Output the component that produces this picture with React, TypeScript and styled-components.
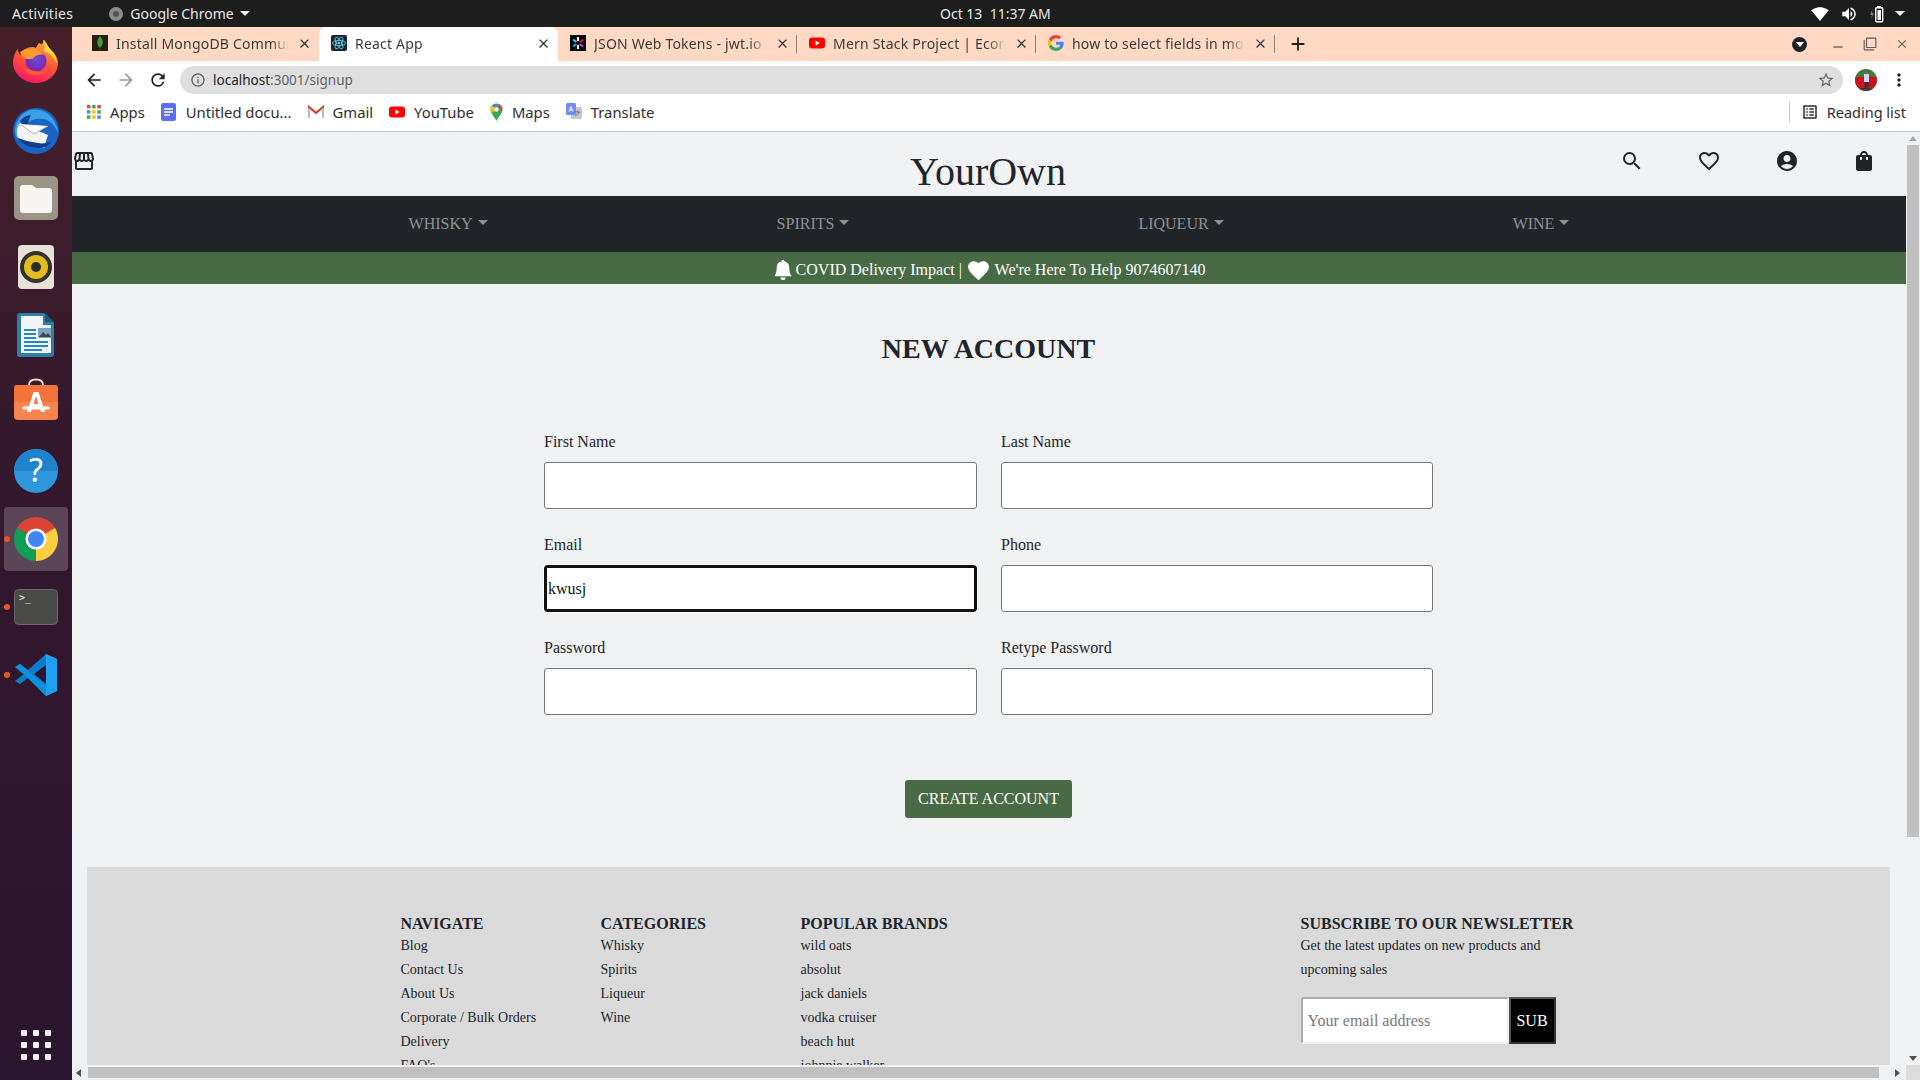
import React from 'react';
import styled, { createGlobalStyle } from 'styled-components';
import {
  MdArrowBack, MdArrowForward, MdRefresh, MdInfoOutline, MdStarBorder, MdMoreVert, MdClose, MdAdd,
  MdOutlineStorefront, MdSearch, MdFavoriteBorder, MdAccountCircle, MdShoppingBag, MdFavorite,
  MdSignalWifi4Bar, MdVolumeUp, MdRemove, MdFilterNone, MdOutlineListAlt,
} from 'react-icons/md';
import { BsBellFill } from 'react-icons/bs';

const Global = createGlobalStyle`
  html, body { margin: 0; padding: 0; width: 1920px; height: 1080px; overflow: hidden; }
  * { box-sizing: border-box; }
  body { font-family: "Liberation Serif", "Times New Roman", serif; color: #212529; }
`;

const UI = `"Noto Sans", "Open Sans", sans-serif`;

const Screen = styled.div`
  width: 1920px; height: 1080px; display: grid; grid-template-rows: 27px 1fr; overflow: hidden;
`;
const TopBar = styled.header`
  background: #1d1d1d; color: #e8e8e8; font: 14px ${UI}; display: grid;
  grid-template-columns: 928px 1fr auto; align-items: center; padding-left: 12px;
`;
const TopLeft = styled.div`display: flex; align-items: center;`;
const Activities = styled.span`letter-spacing: .3px;`;
const ChromeMenu = styled.div`display: flex; align-items: center; gap: 7px; margin-left: 36px;`;
const DimCircle = styled.span`
  width: 14px; height: 14px; border-radius: 50%; display: block;
  border: 4px solid #8b8b8b; background-color: #555;
`;
const Caret = styled.span`
  width: 0; height: 0; border-left: 5px solid transparent; border-right: 5px solid transparent;
  border-top: 5px solid #eee; margin-left: -1px;
`;
const TrayCaret = styled(Caret)`margin-left: -3px;`;
const Clock = styled.div`white-space: pre;`;
const Tray = styled.div`display: flex; align-items: center; gap: 11px; padding-right: 15px; font-size: 18px; color: #fff;`;

const Desk = styled.div`display: grid; grid-template-columns: 72px 1fr; min-height: 0;`;
const Dock = styled.nav`
  background: linear-gradient(180deg, #45202a 0%, #33182e 45%, #29152d 100%);
  display: flex; flex-direction: column; align-items: center; padding: 0 4px 3px;
`;
const DockItem = styled.div<{ $active?: boolean; $running?: boolean }>`
  position: relative; width: 64px; height: 64px; margin-top: 4px; border-radius: 4px;
  display: flex; align-items: center; justify-content: center;
  background: ${p => (p.$active ? 'rgba(255,255,255,0.2)' : 'transparent')};
  &::before {
    content: ''; display: ${p => (p.$running ? 'block' : 'none')}; position: absolute;
    left: 0; top: 29px; width: 6px; height: 6px; border-radius: 50%; background: #e95420;
  }
`;
const GridItem = styled(DockItem)`margin-top: auto;`;

const Browser = styled.div`display: grid; grid-template-rows: 34px 37px 34px 1fr; min-width: 0; min-height: 0; background: #fff;`;
const TabStrip = styled.div`background: #ffd9c4; display: flex; align-items: flex-end; padding-left: 8px; font: 14px ${UI}; color: #3b3b3b; letter-spacing: .2px;`;
const Tab = styled.div<{ $active?: boolean; $sep?: boolean }>`
  width: 239px; height: 34px; display: flex; align-items: center; padding: 0 7px 2px 12px; gap: 8px;
  background: ${p => (p.$active ? '#fff' : 'transparent')}; border-radius: 8px 8px 0 0;
  position: relative;
  &::after {
    content: ''; display: ${p => (p.$sep ? 'block' : 'none')}; position: absolute; right: 0; top: 8px;
    width: 1px; height: 18px; background: #8d8175;
  }
`;
const TabTitle = styled.span`
  flex: 1; white-space: nowrap; overflow: hidden;
  -webkit-mask-image: linear-gradient(90deg, #000 90%, transparent 100%);
  mask-image: linear-gradient(90deg, #000 90%, transparent 100%);
`;
const TabClose = styled(MdClose)`font-size: 15px; color: #333; flex: none;`;
const NewTab = styled(MdAdd)`font-size: 22px; color: #222; margin-left: 12px; align-self: center;`;
const WinControls = styled.div`margin-left: auto; align-self: center; display: flex; align-items: center; color: #5f5f5f; padding-right: 2px;`;
const DarkCircle = styled.span`
  width: 15px; height: 15px; border-radius: 50%; background: #202124; display: flex; align-items: center;
  justify-content: center; margin-right: 15px;
  &::after { content: ''; border-left: 4px solid transparent; border-right: 4px solid transparent; border-top: 5px solid #fff; }
`;
const WinBtn = styled.span<{ $low?: boolean }>`
  width: 32px; display: flex; justify-content: center; font-size: ${p => (p.$low ? '16px' : '14px')};
  padding-top: ${p => (p.$low ? '5px' : '0')};
`;

const Toolbar = styled.div`display: flex; align-items: center; padding: 0 5px 0 6px; color: #202124;`;
const NavBtn = styled.span<{ $dim?: boolean }>`
  width: 32px; display: flex; justify-content: center; font-size: 20px; color: ${p => (p.$dim ? '#9a9a9a' : '#202124')};
`;
const Omnibox = styled.div`
  flex: 1; height: 28px; margin: 0 12px 0 6px; border-radius: 14px; background: #dfdfdf; display: flex;
  align-items: center; padding: 0 8px 0 10px; font: 13.5px ${UI}; color: #5f6368; gap: 7px;
`;
const UrlText = styled.span`flex: 1;`;
const Host = styled.span`color: #202124;`;
const AvatarSlot = styled.span`display: flex; margin-right: 6px;`;
const Bookmarks = styled.div`
  display: flex; align-items: center; padding: 0 14px 6px 15px; font: 14.8px ${UI}; color: #2e2e2e; gap: 16px;
  border-bottom: 1px solid #c8c8c8;
`;
const Bookmark = styled.span`display: flex; align-items: center; gap: 9px; white-space: nowrap;`;
const ReadingList = styled(Bookmark)`
  margin-left: auto; height: 20px; border-left: 1px solid #c4c4c4; padding-left: 11px; gap: 8px; font-size: 14.5px;
`;

const Viewport = styled.div`
  display: grid; grid-template-columns: 1fr 14px; grid-template-rows: 1fr 15px; min-height: 0; min-width: 0; background: #f0f1f3;
`;
const Page = styled.main`overflow: hidden; min-width: 0; min-height: 0; background: #f0f1f3;`;
const VScroll = styled.div`display: flex; flex-direction: column; align-items: center; padding: 4px 0; background: #f0f1f3;`;
const HScroll = styled.div`display: flex; align-items: center; padding: 0 4px; background: #f0f1f3;`;
const ScrollCorner = styled.div`background: #dcdcdc;`;
const VThumb = styled.div`width: 12px; height: 692px; background: #c0c0c0; margin-top: 4px;`;
const VSpace = styled.div`flex: 1;`;
const HThumb = styled.div`height: 11px; width: 1791px; background: #c0c0c0; margin-left: 7px;`;
const ArrowUp = styled.span`border-left: 4px solid transparent; border-right: 4px solid transparent; border-bottom: 5px solid #a8a8a8;`;
const ArrowDown = styled.span`border-left: 4px solid transparent; border-right: 4px solid transparent; border-top: 5px solid #505050;`;
const ArrowLeft = styled.span`border-top: 4px solid transparent; border-bottom: 4px solid transparent; border-right: 5px solid #505050;`;
const ArrowRight = styled.span`border-top: 4px solid transparent; border-bottom: 4px solid transparent; border-left: 5px solid #505050; margin-left: auto; margin-right: 2px;`;

const Header = styled.div`
  height: 64px; display: grid; grid-template-columns: 1fr auto 1fr; padding: 17px 0 0; align-items: start;
`;
const HeaderIconL = styled(MdOutlineStorefront)`font-size: 24px; display: block;`;
const Brand = styled.h1`margin: -1px 2px 0 0; font-size: 40px; font-weight: 400; line-height: 47px; height: 47px;`;
const HeaderIcons = styled.div`display: flex; justify-content: flex-end; gap: 53.3px; font-size: 24px; padding-right: 30px;`;
const NavBar = styled.nav`
  height: 56px; background: #212529; display: flex; justify-content: center; gap: 289px; align-items: center;
  color: #8f9194; font-size: 16px;
`;
const NavLink = styled.a`
  display: flex; align-items: center; gap: 5px;
  &::after { content: ''; border-left: 5px solid transparent; border-right: 5px solid transparent; border-top: 5px solid #8f9194; margin-top: -3px; }
`;
const Notice = styled.div`
  height: 32px; background: #486b45; color: #fff; font-size: 16px; display: flex; justify-content: center; align-items: center;
  padding: 4px 0 0; white-space: pre;
`;
const BellIcon = styled(BsBellFill)`font-size: 20px; margin: 0 3px 0 0;`;
const HeartIcon = styled(MdFavorite)`font-size: 25px; margin: 0;`;
const Title = styled.h2`
  margin: 48px 0 64px; text-align: center; font-size: 28px; font-weight: 700; line-height: 34px; padding-right: 1px;
`;
const Form = styled.form`
  width: 889px; margin: 0 0 0 472px; display: grid; grid-template-columns: 433px 432px; column-gap: 24px; row-gap: 24px;
`;
const Field = styled.div`display: flex; flex-direction: column; gap: 8px;`;
const Label = styled.label`font-size: 16px; line-height: 24px; height: 24px;`;
const Input = styled.input<{ $focus?: boolean }>`
  width: 100%; height: 47px; background: #fff; border-radius: 3px; font: 16px "Liberation Serif", serif; color: #111;
  padding: 0 ${p => (p.$focus ? '1px' : '2px')};
  border: ${p => (p.$focus ? '3px solid #101010' : '1px solid #767676')};
  outline: ${p => (p.$focus ? '1px solid #fff' : 'none')};
`;
const Actions = styled.div`display: flex; justify-content: center; margin: 65px 0 49px; padding-right: 1px;`;
const Submit = styled.button`
  width: 167px; height: 38px; background: #486b45; color: #fff; border: 0; border-radius: 3px;
  font: 16px "Liberation Serif", serif;
`;
const Footer = styled.footer`
  margin: 0 16px 0 15px; background: #dadada; padding: 46px 0 40px 313.5px; display: grid;
  grid-template-columns: 200px 200px 500px 300px; font-size: 14px; line-height: 24px;
`;
const Column = styled.div`display: flex; flex-direction: column;`;
const ColHead = styled.h3`margin: 0; font-size: 16px; font-weight: 700; line-height: 21px; white-space: nowrap;`;
const ColItem = styled.a`display: block; white-space: nowrap;`;
const Subscribe = styled.div`display: flex; margin-top: 15px;`;
const EmailInput = styled.input`
  width: 208px; height: 47px; border: 2px solid #ababab; border-right-color: #eee; border-bottom-color: #eee; border-radius: 3px; background: #fff;
  font: 16px "Liberation Serif", serif; padding: 0 5px;
  &::placeholder { color: #777; opacity: 1; }
`;
const SubButton = styled.button`
  width: 47px; height: 47px; background: #000; color: #fff; border: 2px solid #555; border-right-color: #333; border-bottom-color: #333; padding: 0;
  font: 16px "Liberation Serif", serif;
`;

const Battery = () => (
  <svg width="18" height="18" viewBox="0 0 18 18"><path d="M3.500 4L1 10h2l-1 4 3-6H3z" fill="#777" /><rect x="8" y="1" width="4" height="2" fill="#fff" /><rect x="6.700" y="2.700" width="7" height="14" rx="1" fill="none" stroke="#fff" strokeWidth="1.400" /><rect x="8.500" y="5" width="3.400" height="10" fill="#fff" /></svg>
);
const Mongo = () => (
  <svg width="16" height="16" viewBox="0 0 16 16"><rect width="16" height="16" fill="#2a1f12" /><path d="M8 1c2.600 3 3.200 5.400 2.600 7.600C10.100 10.700 9 11.800 8.300 12.600L8 15l-.4-2.400C6.800 11.800 5.800 10.600 5.400 8.600 5 6.200 6 3.600 8 1z" fill="#3fa037" /></svg>
);
const ReactFav = () => (
  <svg width="16" height="16" viewBox="0 0 16 16"><rect width="16" height="16" rx="2" fill="#20232a" /><g fill="none" stroke="#61dafb" strokeWidth=".8"><ellipse cx="8" cy="8" rx="6.500" ry="2.600" /><ellipse cx="8" cy="8" rx="6.500" ry="2.600" transform="rotate(60 8 8)" /><ellipse cx="8" cy="8" rx="6.500" ry="2.600" transform="rotate(120 8 8)" /></g><circle cx="8" cy="8" r="1.300" fill="#61dafb" /></svg>
);
const Jwt = () => (
  <svg width="16" height="16" viewBox="0 0 16 16"><rect width="16" height="16" fill="#000" /><g strokeWidth="2"><path d="M8 2v4" stroke="#fff" /><path d="M8 10v4" stroke="#fff" /><path d="M3 4.500l3.400 2.500" stroke="#00f2e6" /><path d="M13 11.500L9.600 9" stroke="#d63aff" /><path d="M13 4.500L9.600 7" stroke="#fb015b" /><path d="M3 11.500L6.400 9" stroke="#00b9f1" /></g></svg>
);
const Yt = () => (
  <svg width="16" height="16" viewBox="0 0 16 16"><rect y="2.500" width="16" height="11" rx="3" fill="#f00" /><path d="M6.500 5.500L10.800 8l-4.300 2.500z" fill="#fff" /></svg>
);
const GoogleG = () => (
  <svg width="16" height="16" viewBox="0 0 48 48"><path fill="#EA4335" d="M24 9.500c3.500 0 6.700 1.200 9.200 3.600l6.900-6.900C35.900 2.400 30.500 0 24 0 14.600 0 6.500 5.400 2.600 13.200l8 6.200C12.400 13.700 17.700 9.500 24 9.500z" /><path fill="#4285F4" d="M47 24.500c0-1.600-.1-3.100-.4-4.500H24v9h12.900c-.6 3-2.200 5.500-4.800 7.200l7.700 6C44.300 38 47 31.800 47 24.500z" /><path fill="#FBBC05" d="M10.500 28.600c-.5-1.400-.8-3-.8-4.600s.3-3.200.8-4.600l-8-6.200C1 16.500 0 20.100 0 24s1 7.500 2.600 10.800z" /><path fill="#34A853" d="M24 48c6.500 0 11.900-2.100 15.900-5.800l-7.700-6c-2.200 1.400-4.900 2.300-8.200 2.300-6.300 0-11.600-4.200-13.500-9.900l-8 6.200C6.500 42.600 14.600 48 24 48z" /></svg>
);
const AppsIcon = () => (
  <svg width="14" height="14" viewBox="0 0 14 14">
    {[['#ea4335', '#34a853', '#ea4335'], ['#4285f4', '#fbbc05', '#34a853'], ['#34a853', '#fbbc05', '#4285f4']].map((r, y) =>
      r.map((c, x) => <rect key={`${x}${y}`} x={x * 5.2} y={y * 5.2} width="3.4" height="3.4" fill={c} />))}
  </svg>
);
const Docs = () => (
  <svg width="16" height="18" viewBox="0 0 16 18"><rect width="15" height="18" rx="2" fill="#5b6ff0" /><path d="M3 6h9M3 9h9M3 12h6" stroke="#fff" strokeWidth="1.500" /></svg>
);
const Gmail = () => (
  <svg width="16" height="14" viewBox="0 0 16 14"><path d="M1 13V2l7 6 7-6v11" fill="none" stroke="#d93025" strokeWidth="2" /><path d="M1 13V3" stroke="#b8b8b8" strokeWidth="2" /><path d="M15 13V3" stroke="#b8b8b8" strokeWidth="2" /></svg>
);
const Maps = () => (
  <svg width="13" height="18" viewBox="0 0 13 18"><path d="M6.500 18C4 13 .5 10.500.5 6.500a6 6 0 0 1 12 0C12.500 10.500 9 13 6.500 18z" fill="#34a853" /><path d="M2 2.500A6 6 0 0 1 6.500.5l2 3.500-4 3.500z" fill="#4285f4" /><path d="M8.500.8a6 6 0 0 1 4 5.700L9 7z" fill="#ea4335" /><path d="M.5 6.500c0 1.500.6 2.800 1.400 4L6 6 2 2.500A6 6 0 0 0 .5 6.500z" fill="#fbbc05" /><circle cx="6.500" cy="6.500" r="2.200" fill="#fff" /></svg>
);
const Translate = () => (
  <svg width="16" height="17" viewBox="0 0 16 17"><rect x="5" y="4" width="11" height="12" rx="1.500" fill="#c4c8d0" /><rect width="10" height="12" rx="1.500" fill="#6f8df0" /><path d="M3 8.500l2-5 2 5M3.800 7h2.400" fill="none" stroke="#fff" strokeWidth="1" /><path d="M9 9h5M11.500 8v1M13 9c-.5 2-2 3-3.500 3.500" fill="none" stroke="#666" strokeWidth=".9" /></svg>
);
const Avatar = () => (
  <svg width="22" height="22" viewBox="0 0 22 22"><defs><clipPath id="av"><circle cx="11" cy="11" r="11" /></clipPath></defs><g clipPath="url(#av)"><rect width="22" height="22" fill="#3e7a3c" /><rect y="8" width="22" height="11" fill="#cf1020" /><rect y="19" width="22" height="3" fill="#4a3a30" /><rect x="9" y="5" width="5" height="8" fill="#d6d6ec" /><rect x="9.500" y="13" width="4" height="7" fill="#333" /><circle cx="11.500" cy="3.500" r="1.800" fill="#8a6248" /></g></svg>
);

const Firefox = () => (
  <svg width="46" height="46" viewBox="0 2 46 46">
    <defs>
      <linearGradient id="ffa" x1=".7" y1="0" x2=".3" y2="1"><stop offset="0" stopColor="#ffb52c" /><stop offset=".5" stopColor="#ff5634" /><stop offset="1" stopColor="#f5156c" /></linearGradient>
      <radialGradient id="ffb" cx=".5" cy=".4"><stop offset="0" stopColor="#6a4be0" /><stop offset="1" stopColor="#7b2bb0" /></radialGradient>
    </defs>
    <path d="M30 1c5 5 4 8 7 10 5 4 8 9 8 14 0 11-10 20-22 20S0 36 0 24c0-5 2-10 5-13 0 3 1 5 3 6 1-5 6-8 11-8 1 0 3 0 4 1 1-3 3-5 3-5 3 2 5 1 4-5z" fill="url(#ffa)" />
    <path d="M30 1c4 4 5 8 8 11 4 4 6 9 6 13-3-5-7-10-13-12 1-4 1-8-1-12z" fill="#ffd84a" />
    <circle cx="23" cy="23" r="10.500" fill="url(#ffb)" />
    <path d="M7 14c4-3 9-4 13-3 5 1 9 3 12 6-4-1-7 0-10 1-1 3-4 3-7 3-3 0-7-3-8-7z" fill="#ff9a2e" />
    <path d="M8 28c2 5 8 9 15 9 5 0 9-2 12-5-4 2-9 2-13 1-6-1-11-3-14-5z" fill="#ff5a30" />
  </svg>
);
const Thunderbird = () => (
  <svg width="48" height="48" viewBox="0 0 48 48">
    <circle cx="24" cy="24" r="23" fill="#1a64c4" />
    <path d="M3 24c0-9 6-18 15-21 9-2 18 2 23 9 3 5 5 9 5 14-3-7-8-13-15-14-7-1-13 1-20 7C7 22 5 26 6 32c-2-2-3-5-3-8z" fill="#3aa0e8" />
    <path d="M8 14c3-4 7-6 11-6-1 3-3 5-3 9l-5 2z" fill="#0a3f8f" />
    <path d="M8 16l28 12-4 13-26-10c-2-6-1-11 2-15z" fill="#f4f4f4" />
    <path d="M8 17l14 10 14-8" fill="#fff" stroke="#aab4c4" strokeWidth="1" />
    <path d="M6 31c4 6 12 10 20 10 6 0 10-2 13-6-5 1-9 2-13 1-8-1-15-3-20-5z" fill="#103f8a" />
  </svg>
);
const Files = () => (
  <svg width="46" height="46" viewBox="0 1 46 46">
    <rect x="1" y="1" width="44" height="44" rx="5" fill="#9c9585" />
    <path d="M7 13a3 3 0 0 1 3-3h9l4 3h13a3 3 0 0 1 3 3v19a3 3 0 0 1-3 3H10a3 3 0 0 1-3-3z" fill="#f6f5f2" />
  </svg>
);
const Rhythmbox = () => (
  <svg width="38" height="46" viewBox="0 0 38 46">
    <rect x="1" y="1" width="36" height="44" rx="4" fill="#e6e2d8" />
    <circle cx="19" cy="23" r="16" fill="#33322f" />
    <circle cx="19" cy="23" r="12" fill="#e4bd1c" />
    <circle cx="19" cy="23" r="5" fill="#2a2a28" />
  </svg>
);
const Writer = () => (
  <svg width="38" height="46" viewBox="0 0 38 46">
    <path d="M3 1h24l10 10v31a3 3 0 0 1-3 3H3a3 3 0 0 1-3-3V4a3 3 0 0 1 3-3z" fill="#2e7fa8" />
    <path d="M4 4h22v9h8v28H4z" fill="#f2f5f7" />
    <path d="M28 1l9 9h-9z" fill="#185a80" />
    <path d="M7 18h12M7 22h12M7 26h12M7 30h24M7 34h24M7 38h18" stroke="#2a86b8" strokeWidth="2" />
    <rect x="21" y="16" width="13" height="10" fill="#7aa4c0" /><path d="M22 25l4-5 3 3 2-2 3 4z" fill="#3a4a55" />
  </svg>
);
const Software = () => (
  <svg width="46" height="64" viewBox="0 0 46 64">
    <path d="M16 14c0-4 3-5.500 7-5.500s7 1.500 7 5.500" fill="none" stroke="#f0dcc0" strokeWidth="1.800" />
    <path d="M1 17a3 3 0 0 1 3-3h38a3 3 0 0 1 3 3v14H1z" fill="#f4733a" />
    <path d="M1 31h44v14a4 4 0 0 1-4 4H5a4 4 0 0 1-4-4z" fill="#f78450" />
    <path d="M20.500 21h5L32 41h-4l-1.500-5h-7L18 41h-4zM23 25l-2.500 8h5z" fill="#fff" />
    <rect x="9" y="35.500" width="28" height="3" rx="1.500" fill="#fff" />
  </svg>
);
const Help = () => (
  <svg width="46" height="46" viewBox="0 0 46 46">
    <circle cx="23" cy="23" r="22" fill="#2f97dc" />
    <path d="M1 23a22 22 0 0 1 44 0z" fill="#1f84cc" />
    <text x="23" y="34" textAnchor="middle" fontFamily="Noto Sans, sans-serif" fontSize="32" fill="#fff">?</text>
  </svg>
);
const ChromeLogo = () => (
  <svg width="46" height="46" viewBox="0 0 46 46">
    <path d="M23 23L3.950 12A22 22 0 0 1 42.050 12z" fill="#db4437" />
    <path d="M23 23L3.950 12A22 22 0 0 0 23 45z" fill="#0f9d58" />
    <path d="M23 23L23 45A22 22 0 0 0 42.050 12z" fill="#ffcd40" />
    <circle cx="23" cy="23" r="10.500" fill="#fff" />
    <circle cx="23" cy="23" r="8" fill="#4285f4" />
  </svg>
);
const Terminal = () => (
  <svg width="44" height="36" viewBox="0 0 44 36">
    <rect x=".5" y=".5" width="43" height="35" rx="4" fill="#4a4a48" stroke="#666" />
    <text x="5" y="12" fontFamily="DejaVu Sans Mono, monospace" fontSize="10" fill="#eee">&gt;_</text>
  </svg>
);
const VSCode = () => (
  <svg width="44" height="44" viewBox="0 0 44 44">
    <path d="M32 1l11 5v32l-11 5L14 25l-8 6-5-3 9-7-9-7 5-3 8 6z" fill="#0a7ccc" />
    <path d="M32 1l11 5v32l-11 5z" fill="#1fa0f2" />
    <path d="M1 14l5-3 26 22v10L14 25z" fill="#0c92dc" />
    <path d="M32 12L20 21l12 10z" fill="#2a1630" />
  </svg>
);
const AppGrid = () => (
  <svg width="32" height="32" viewBox="0 0 32 32">
    {[0, 1, 2].map(y => [0, 1, 2].map(x => <rect key={`${x}${y}`} x={1 + x * 12} y={1 + y * 12} width="6" height="6" rx="1" fill="#f2f2f2" />))}
  </svg>
);

const tabs = [
  { icon: <Mongo />, title: 'Install MongoDB Community Edition' },
  { icon: <ReactFav />, title: 'React App', active: true },
  { icon: <Jwt />, title: 'JSON Web Tokens - jwt.io', sep: true },
  { icon: <Yt />, title: 'Mern Stack Project | Ecommerce', sep: true },
  { icon: <GoogleG />, title: 'how to select fields in mongoose', sep: true },
];
const dock = [
  { el: <Firefox /> }, { el: <Thunderbird /> }, { el: <Files /> }, { el: <Rhythmbox /> }, { el: <Writer /> },
  { el: <Software /> }, { el: <Help /> }, { el: <ChromeLogo />, active: true, running: true },
  { el: <Terminal />, running: true }, { el: <VSCode />, running: true },
];
const fields = [
  { label: 'First Name' }, { label: 'Last Name' }, { label: 'Email', value: 'kwusj', focus: true },
  { label: 'Phone' }, { label: 'Password' }, { label: 'Retype Password' },
];
const columns = [
  { head: 'NAVIGATE', items: ['Blog', 'Contact Us', 'About Us', 'Corporate / Bulk Orders', 'Delivery', "FAQ's"] },
  { head: 'CATEGORIES', items: ['Whisky', 'Spirits', 'Liqueur', 'Wine'] },
  { head: 'POPULAR BRANDS', items: ['wild oats', 'absolut', 'jack daniels', 'vodka cruiser', 'beach hut', 'johnnie walker'] },
];

export default function App() {
  return (
    <Screen>
      <Global />
      <TopBar>
        <TopLeft>
          <Activities>Activities</Activities>
          <ChromeMenu><DimCircle /><span>Google Chrome</span><Caret /></ChromeMenu>
        </TopLeft>
        <Clock>Oct 13  11:37 AM</Clock>
        <Tray><MdSignalWifi4Bar /><MdVolumeUp /><Battery /><TrayCaret /></Tray>
      </TopBar>
      <Desk>
        <Dock>
          {dock.map((d, i) => <DockItem key={i} $active={d.active} $running={d.running}>{d.el}</DockItem>)}
          <GridItem><AppGrid /></GridItem>
        </Dock>
        <Browser>
          <TabStrip>
            {tabs.map(t => (
              <Tab key={t.title} $active={t.active} $sep={t.sep}>
                {t.icon}<TabTitle>{t.title}</TabTitle><TabClose />
              </Tab>
            ))}
            <NewTab />
            <WinControls>
              <DarkCircle />
              <WinBtn $low><MdRemove /></WinBtn><WinBtn><MdFilterNone /></WinBtn><WinBtn><MdClose /></WinBtn>
            </WinControls>
          </TabStrip>
          <Toolbar>
            <NavBtn><MdArrowBack /></NavBtn><NavBtn $dim><MdArrowForward /></NavBtn><NavBtn><MdRefresh /></NavBtn>
            <Omnibox>
              <MdInfoOutline size={16} />
              <UrlText><Host>localhost</Host>:3001/signup</UrlText>
              <MdStarBorder size={18} />
            </Omnibox>
            <AvatarSlot><Avatar /></AvatarSlot>
            <NavBtn><MdMoreVert /></NavBtn>
          </Toolbar>
          <Bookmarks>
            <Bookmark><AppsIcon />Apps</Bookmark>
            <Bookmark><Docs />Untitled docu...</Bookmark>
            <Bookmark><Gmail />Gmail</Bookmark>
            <Bookmark><Yt />YouTube</Bookmark>
            <Bookmark><Maps />Maps</Bookmark>
            <Bookmark><Translate />Translate</Bookmark>
            <ReadingList><MdOutlineListAlt size={18} />Reading list</ReadingList>
          </Bookmarks>
          <Viewport>
            <Page>
              <Header>
                <HeaderIconL />
                <Brand>YourOwn</Brand>
                <HeaderIcons><MdSearch /><MdFavoriteBorder /><MdAccountCircle /><MdShoppingBag /></HeaderIcons>
              </Header>
              <NavBar>
                {['WHISKY', 'SPIRITS', 'LIQUEUR', 'WINE'].map(n => <NavLink key={n}>{n}</NavLink>)}
              </NavBar>
              <Notice><BellIcon />{'COVID Delivery Impact | '}<HeartIcon />{" We're Here To Help 9074607140"}</Notice>
              <Title>NEW ACCOUNT</Title>
              <Form>
                {fields.map(f => (
                  <Field key={f.label}>
                    <Label>{f.label}</Label>
                    <Input $focus={f.focus} defaultValue={f.value} />
                  </Field>
                ))}
              </Form>
              <Actions><Submit type="button">CREATE ACCOUNT</Submit></Actions>
              <Footer>
                {columns.map(c => (
                  <Column key={c.head}>
                    <ColHead>{c.head}</ColHead>
                    {c.items.map(i => <ColItem key={i}>{i}</ColItem>)}
                  </Column>
                ))}
                <Column>
                  <ColHead>SUBSCRIBE TO OUR NEWSLETTER</ColHead>
                  <ColItem>Get the latest updates on new products and</ColItem>
                  <ColItem>upcoming sales</ColItem>
                  <Subscribe>
                    <EmailInput placeholder="Your email address" />
                    <SubButton type="button">SUB</SubButton>
                  </Subscribe>
                </Column>
              </Footer>
            </Page>
            <VScroll><ArrowUp /><VThumb /><VSpace /><ArrowDown /></VScroll>
            <HScroll><ArrowLeft /><HThumb /><ArrowRight /></HScroll>
            <ScrollCorner />
          </Viewport>
        </Browser>
      </Desk>
    </Screen>
  );
}
